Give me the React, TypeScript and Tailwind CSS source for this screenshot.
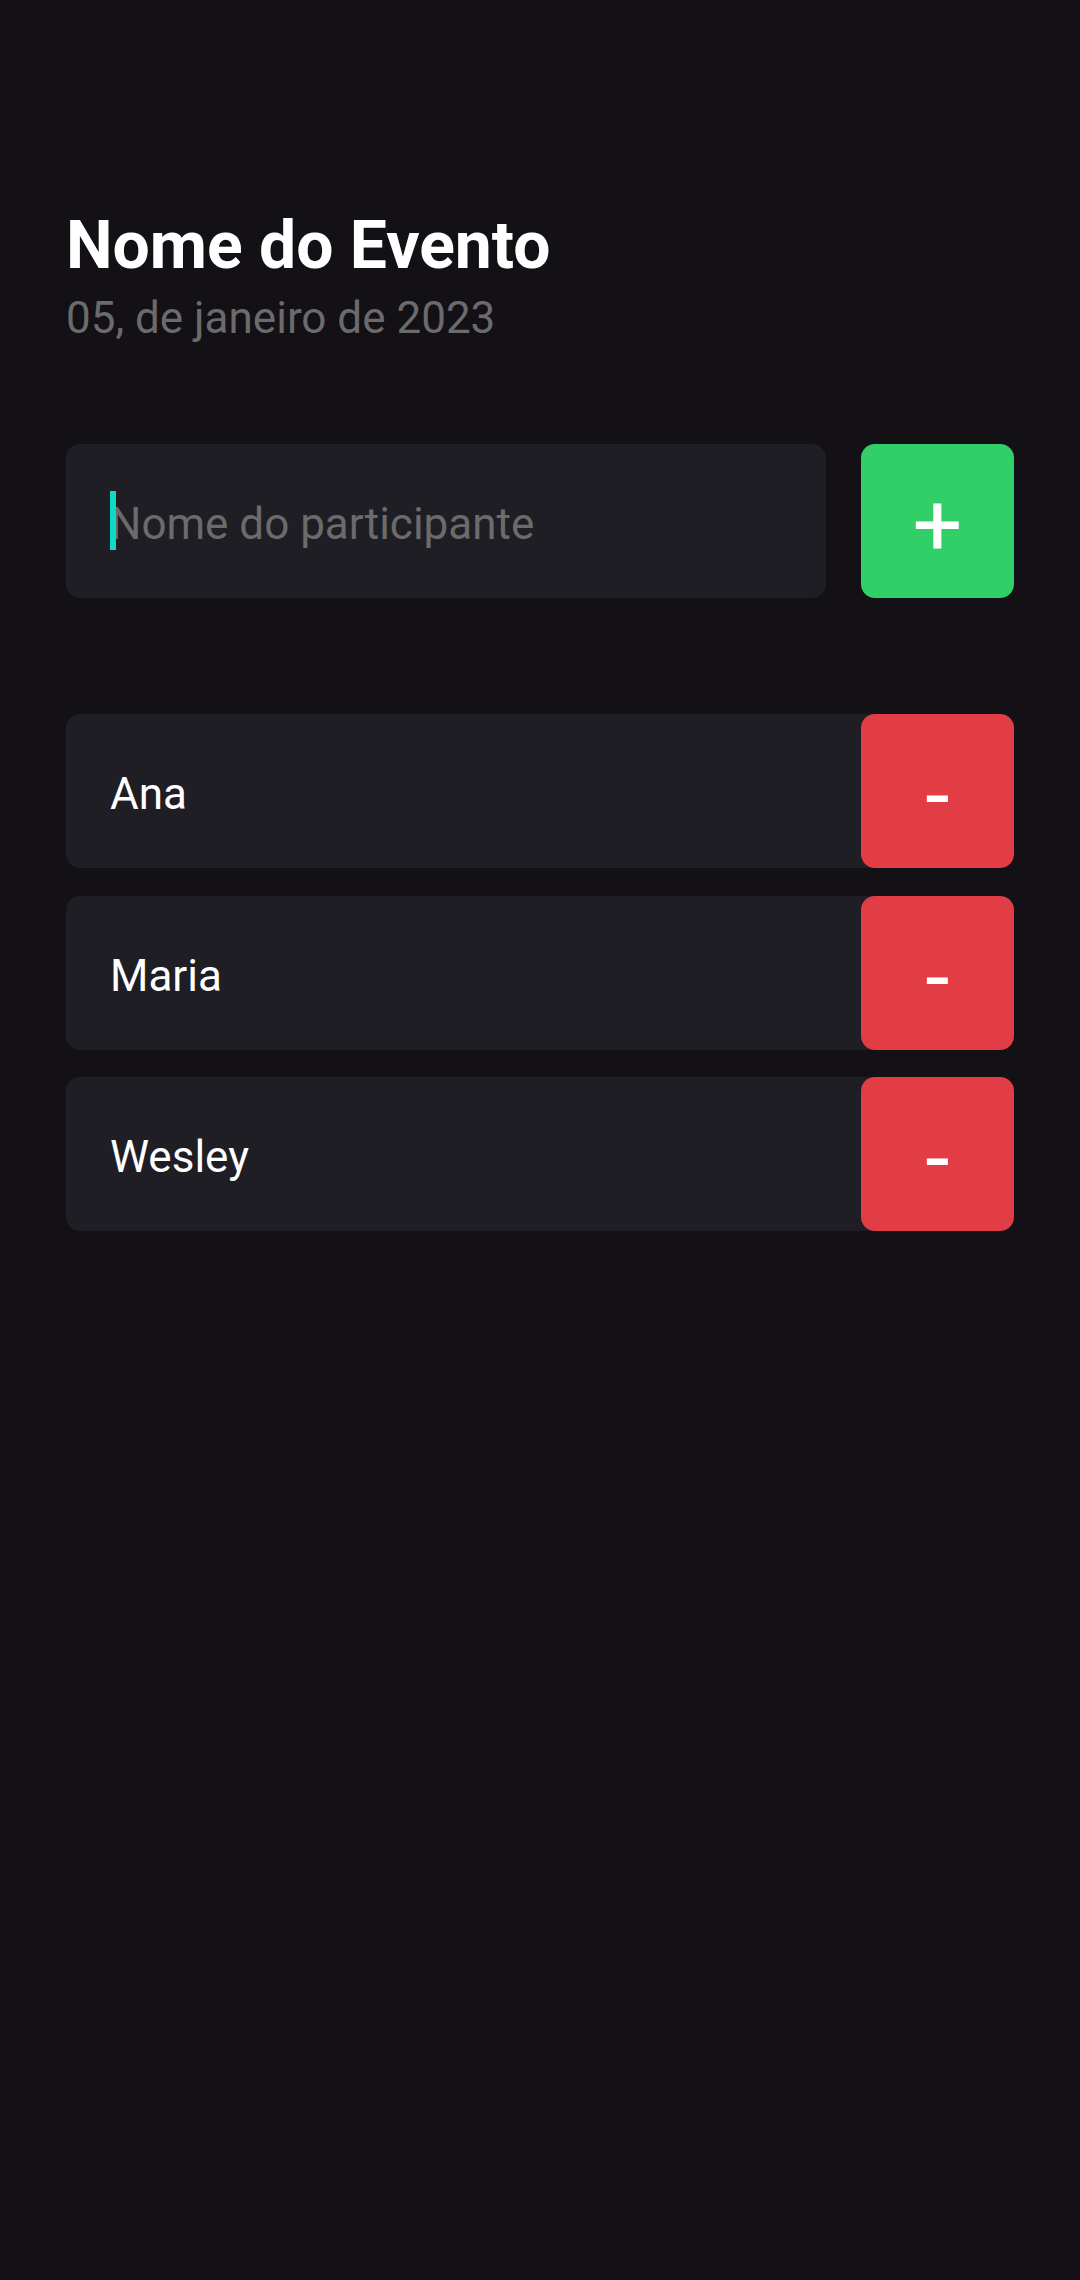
import { useState } from "react";

const initialParticipants = ["Ana", "Maria", "Wesley"];

function ParticipantRow({ name, onRemove }: { name: string; onRemove: () => void }) {
  return (
    <li className="flex h-[154px] items-center rounded-[14px] bg-[#1F1E25]">
      <span className="flex-1 pl-[44px] pt-[6px] text-[44px] text-white">{name}</span>
      <button
        type="button"
        onClick={onRemove}
        className="flex h-full w-[153px] items-center justify-center rounded-[14px] bg-[#E23C44] pt-[8px] text-[88px] text-white"
      >
        -
      </button>
    </li>
  );
}

export default function App() {
  const [participants, setParticipants] = useState(initialParticipants);
  const [name, setName] = useState("");

  const add = () => {
    if (!name.trim()) return;
    setParticipants((prev) => [...prev, name.trim()]);
    setName("");
  };

  return (
    <div className="min-h-[2280px] w-[1080px] bg-[#131016] px-[66px] pt-[207px] font-['Roboto',sans-serif]">
      <h1 className="text-[66px] font-bold leading-[77px] text-white">Nome do Evento</h1>
      <p className="mt-[8px] text-[44px] leading-[52px] text-[#6B6B6B]">05, de janeiro de 2023</p>

      <form
        className="mt-[100px] flex h-[154px] gap-[35px]"
        onSubmit={(e) => {
          e.preventDefault();
          add();
        }}
      >
        <div className="relative flex-1 rounded-[14px] bg-[#1F1E25]">
          <input
            value={name}
            onChange={(e) => setName(e.target.value)}
            placeholder="Nome do participante"
            className="h-full w-full bg-transparent px-[44px] pt-[6px] text-[44px] text-white caret-transparent outline-none placeholder:text-[#6B6B6B]"
          />
          <span className="absolute left-[44px] top-[47px] h-[59px] w-[6px] bg-[#12D9C6]" />
        </div>
        <button
          type="submit"
          className="flex w-[153px] items-center justify-center rounded-[14px] bg-[#31CF67] pt-[8px] text-[88px] text-white"
        >
          +
        </button>
      </form>

      <ul className="mt-[116px] flex flex-col gap-[27.5px]">
        {participants.map((p, i) => (
          <ParticipantRow
            key={`${p}-${i}`}
            name={p}
            onRemove={() => setParticipants((prev) => prev.filter((_, idx) => idx !== i))}
          />
        ))}
      </ul>
    </div>
  );
}
